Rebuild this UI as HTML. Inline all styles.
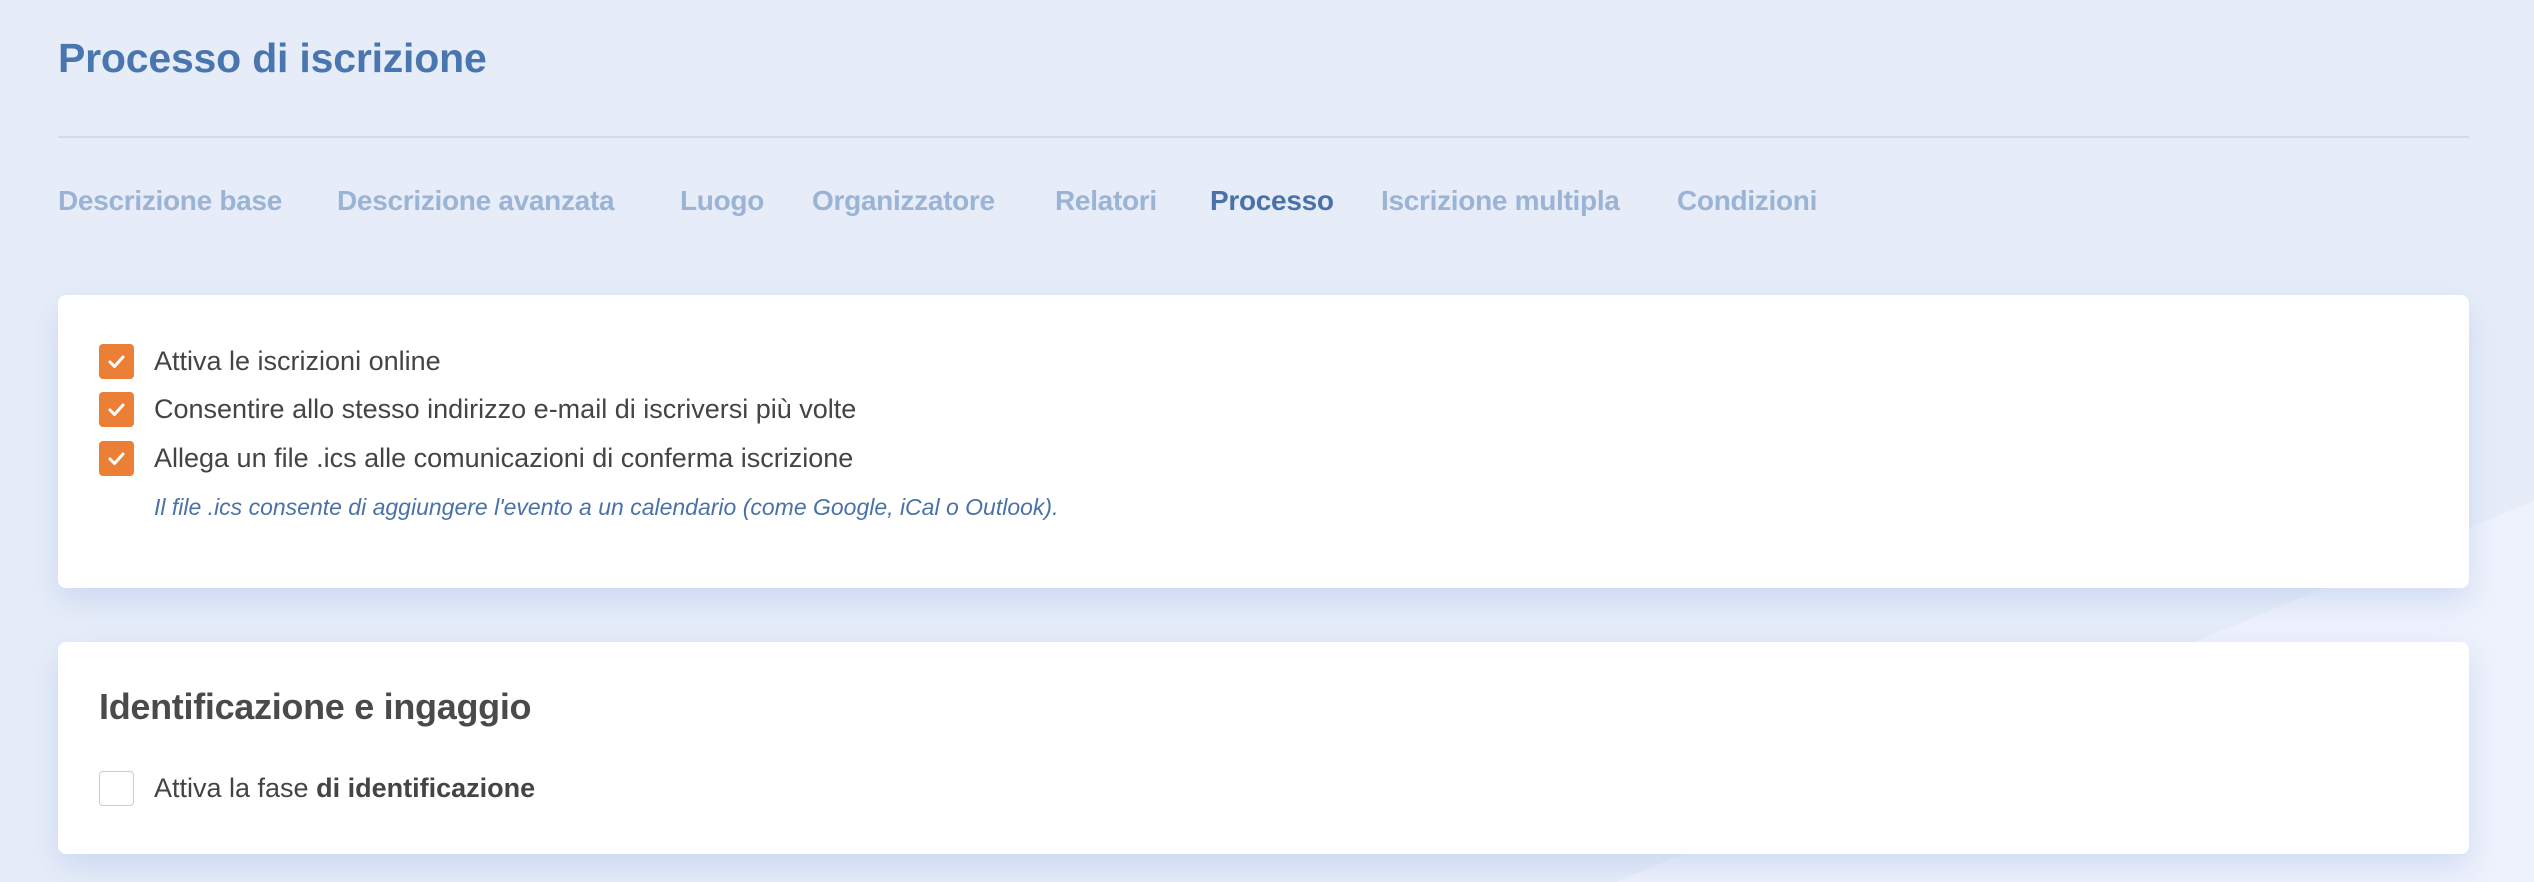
<!DOCTYPE html>
<html><head><meta charset="utf-8"><style>
*{margin:0;padding:0;box-sizing:border-box}
body{width:2534px;height:882px;overflow:hidden;background:#e6edf8;font-family:"Liberation Sans",sans-serif;position:relative}
.bgshape{position:absolute;left:0;top:0;width:2534px;height:882px}
.t{position:absolute;white-space:nowrap}
h1{position:absolute;left:58px;top:35px;font-size:41px;font-weight:bold;color:#4a76b0;letter-spacing:-0.2px}
.line{position:absolute;left:58px;top:136px;width:2411px;height:2px;background:#d2dbe7}
.tab{position:absolute;top:185px;font-size:28px;font-weight:bold;color:#9bb3d4;white-space:nowrap;letter-spacing:-0.3px}
.tab.a{color:#4a72a8}
.card{position:absolute;left:58px;width:2411px;background:#fff;border-radius:8px;box-shadow:0 12px 30px rgba(170,190,235,.45)}
.cb{position:absolute;left:99px;width:35px;height:35px;border-radius:4px;background:#ec7f36}
.cb svg{position:absolute;left:9px;top:10px}
.cb.e{background:#fff;border:1.5px solid #ccc}
.lbl{position:absolute;left:154px;font-size:27px;color:#444;white-space:nowrap}
</style></head><body>
<svg class="bgshape" viewBox="0 0 2534 882"><polygon points="1616,882 2534,501 2534,882" fill="#eef2fc"/></svg>
<h1>Processo di iscrizione</h1>
<div class="line"></div>
<div class="tab" style="left:58px">Descrizione base</div>
<div class="tab" style="left:337px">Descrizione avanzata</div>
<div class="tab" style="left:680px">Luogo</div>
<div class="tab" style="left:812px">Organizzatore</div>
<div class="tab" style="left:1055px">Relatori</div>
<div class="tab a" style="left:1210px">Processo</div>
<div class="tab" style="left:1381px">Iscrizione multipla</div>
<div class="tab" style="left:1677px">Condizioni</div>

<div class="card" style="top:295px;height:293px"></div>
<div class="card" style="top:642px;height:212px"></div>

<div class="cb" style="top:344px"><svg width="17" height="15" viewBox="0 0 17 15"><path d="M2 8l4.5 4.5L15 3" stroke="#fff" stroke-width="3" fill="none" stroke-linecap="round" stroke-linejoin="round"/></svg></div>
<div class="lbl" style="top:346px">Attiva le iscrizioni online</div>
<div class="cb" style="top:392px"><svg width="17" height="15" viewBox="0 0 17 15"><path d="M2 8l4.5 4.5L15 3" stroke="#fff" stroke-width="3" fill="none" stroke-linecap="round" stroke-linejoin="round"/></svg></div>
<div class="lbl" style="top:394px">Consentire allo stesso indirizzo e-mail di iscriversi più volte</div>
<div class="cb" style="top:441px"><svg width="17" height="15" viewBox="0 0 17 15"><path d="M2 8l4.5 4.5L15 3" stroke="#fff" stroke-width="3" fill="none" stroke-linecap="round" stroke-linejoin="round"/></svg></div>
<div class="lbl" style="top:443px">Allega un file .ics alle comunicazioni di conferma iscrizione</div>
<div class="t" style="left:154px;top:494px;font-size:23px;font-style:italic;color:#4a72a8">Il file .ics consente di aggiungere l'evento a un calendario (come Google, iCal o Outlook).</div>

<div class="t" style="left:99px;top:686px;font-size:36px;font-weight:bold;color:#4a4a4a;letter-spacing:-0.3px">Identificazione e ingaggio</div>
<div class="cb e" style="top:771px"></div>
<div class="lbl" style="top:773px">Attiva la fase <b>di identificazione</b></div>
</body></html>
